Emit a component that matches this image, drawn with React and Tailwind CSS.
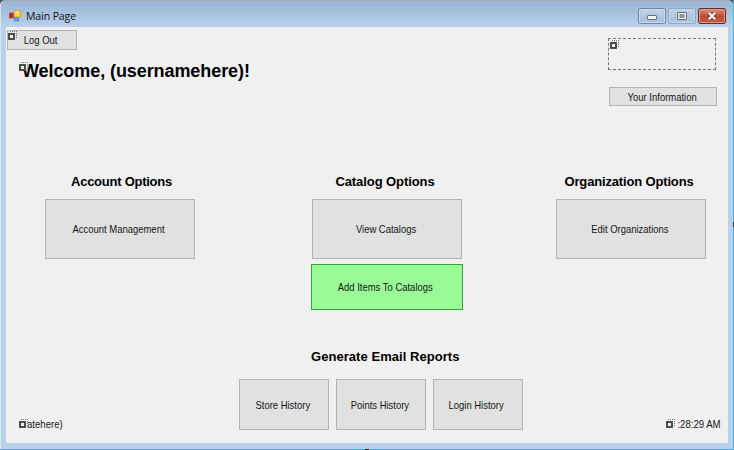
import React from "react";

function Glyph({ className = "" }) {
  return (
    <svg className={`absolute ${className}`} width="10" height="9" viewBox="0 0 10 9" shapeRendering="crispEdges">
      <path d="M2 0.5h7M8.5 2v6" stroke="#777" strokeDasharray="1 1" fill="none" />
      <rect x="0" y="2" width="7" height="7" fill="#f8f8f8" />
      <rect x="1" y="3" width="5" height="5" fill="#eee" stroke="#3c3c3c" strokeWidth="1.8" shapeRendering="auto" />
    </svg>
  );
}

function Button({ className = "", tone = "border-[#b3b3b3] bg-[#e1e1e1]", label = "", glyph = false, children }) {
  return (
    <button
      className={`relative flex shrink-0 items-center justify-center border text-[11px] leading-[12px] whitespace-nowrap text-[#161616] ${tone} ${className}`}
    >
      <span className={`block scale-x-[0.86] ${label}`}>{children}</span>
      {glyph && <Glyph className="top-0 left-0" />}
    </button>
  );
}

function Heading({ className = "", children }) {
  return <h2 className={`text-[13px] leading-[16px] font-bold whitespace-nowrap text-black ${className}`}>{children}</h2>;
}

function TitleBar() {
  return (
    <header className="flex h-[26px] shrink-0 items-start bg-gradient-to-b from-[#9ab6d3] to-[#b9d1ea] pr-[7px] pl-2">
      <svg className="mt-[9px] shrink-0" width="12" height="12" viewBox="0 0 12 12">
        <rect x="0.5" y="3" width="4" height="5" fill="#c52a22" stroke="#a94743" strokeWidth="0.7" />
        <rect x="5" y="0.5" width="6.5" height="6.5" fill="#f9cf35" stroke="#c49a32" strokeWidth="0.7" />
        <path d="M6 1.5h4v2H6z" fill="#ffe78a" />
        <rect x="5.3" y="7.7" width="4.4" height="3.3" fill="#6d9ee8" stroke="#4a78ca" strokeWidth="0.7" />
      </svg>
      <h1 className="mt-[8px] ml-[5px] font-['Open_Sans','Noto_Sans',sans-serif] text-[10.5px] leading-[15px] tracking-[-0.09px] text-[#111]">
        Main Page
      </h1>
      <div className="mt-[7px] ml-auto flex gap-[2px]">
        <div className="flex h-4 w-7 items-center justify-center rounded-[2px] border border-[#7189a5] bg-gradient-to-b from-[#c1d3e7] to-[#a5bfdb] shadow-[inset_0_0_0_1px_#cbdbed]">
          <div className="mt-[3px] h-[5px] w-[10px] rounded-[1px] border border-[#68717d] bg-[#f4f4f4]" />
        </div>
        <div className="flex h-4 w-7 items-center justify-center rounded-[2px] border border-[#8da5bf] bg-gradient-to-b from-[#bdd0e5] to-[#a9c1dc] shadow-[inset_0_0_0_1px_#c5d7ea]">
          <svg width="10" height="8" viewBox="0 0 10 8">
            <rect x="0.5" y="0.5" width="9" height="7" rx="0.5" fill="#eee" stroke="#626c78" />
            <rect x="3" y="2.8" width="4" height="2.4" fill="#aebed0" stroke="#626c78" />
          </svg>
        </div>
        <div className="flex h-4 w-7 items-center justify-center rounded-[2px] border border-[#692b30] bg-gradient-to-b from-[#d89583] via-[#c14b37] to-[#c35a40] shadow-[inset_0_0_0_1px_#dc998a]">
          <svg width="10" height="8" viewBox="0 0 10 8">
            <path d="M1.8 0.8l6.4 6.4M8.2 0.8l-6.4 6.4" stroke="#5d3940" strokeWidth="3.8" />
            <path d="M1.8 0.8l6.4 6.4M8.2 0.8l-6.4 6.4" stroke="#f7f4f4" strokeWidth="2.3" />
          </svg>
        </div>
      </div>
    </header>
  );
}

export default function App() {
  return (
    <div className="relative h-[450px] w-[734px] overflow-hidden bg-[#39bcd9] font-['Liberation_Sans',Arial,sans-serif]">
      <div className="h-[449px] w-[733px] bg-[#4a5056]">
        <div className="h-[449px] rounded-t-[5px] bg-[#a5abb0] pt-px">
          <div className="flex h-[448px] flex-col overflow-hidden rounded-t-[5px] border-l border-[#d6e5f4] bg-[#b9d1ea]">
            <TitleBar />
            <main className="mr-[5px] ml-[5px] flex h-[416px] w-[722px] shrink-0 flex-col bg-[#f0f0f0]">
              <section className="flex h-[147px] shrink-0 items-start justify-between pt-[3px] pr-[11px] pl-px">
                <div>
                  <Button className="h-[20px] w-[70px]" label="-ml-[3px]" glyph>
                    Log Out
                  </Button>
                  <div className="relative mt-[10px] ml-[15px] text-[18px] leading-[22px] font-bold tracking-[-0.08px] whitespace-nowrap text-black">
                    Welcome, (usernamehere)!
                    <Glyph className="top-[2px] left-[-3px]" />
                  </div>
                </div>
                <div className="flex flex-col items-end pt-[8px]">
                  <div className="relative mr-px h-[32px] w-[108px] border border-dashed border-[#777]">
                    <Glyph className="top-[1px] left-[1px]" />
                  </div>
                  <Button className="mt-[17px] h-[19px] w-[108px]" label="-ml-[2px]">Your Information</Button>
                </div>
              </section>

              <section className="flex h-[147px] shrink-0 items-start pl-[39px]">
                <div className="flex w-[150px] flex-col items-center">
                  <Heading className="ml-[3px] tracking-[-0.25px]">Account Options</Heading>
                  <Button className="mt-[9px] h-[60px] w-[150px]" label="-ml-[2px]">Account Management</Button>
                </div>
                <div className="ml-[116px] flex w-[152px] flex-col items-center">
                  <Heading className="-ml-[4px] tracking-[-0.08px]">Catalog Options</Heading>
                  <Button className="mt-[9px] h-[60px] w-[150px]" label="-ml-[2px]">View Catalogs</Button>
                  <Button
                    className="mt-[5px] h-[46px] w-[152px]"
                    tone="border-[#35a535] bg-[#98fb98]"
                    label="-ml-[3px]"
                  >
                    Add Items To Catalogs
                  </Button>
                </div>
                <div className="ml-[93px] flex w-[150px] flex-col items-center">
                  <Heading className="-ml-[4px] tracking-[-0.16px]">Organization Options</Heading>
                  <Button className="mt-[9px] h-[60px] w-[150px]" label="-ml-[3px]">Edit Organizations</Button>
                </div>
              </section>

              <section className="flex flex-col pt-[27px]">
                <Heading className="mt-px ml-[305px] tracking-[0.05px]">Generate Email Reports</Heading>
                <div className="mt-[14px] flex items-end pr-[7px] pl-[21px] text-[11px] leading-[15px] text-[#161616]">
                  <div className="relative -mb-[2px] w-[212px]">
                    <span className="block origin-left scale-x-[0.87]">atehere)</span>
                    <Glyph className="top-[2px] left-[-8px]" />
                  </div>
                  <div className="flex gap-[7px]">
                    <Button className="h-[51px] w-[90px]" label="-ml-[2px]">Store History</Button>
                    <Button className="h-[51px] w-[90px]" label="-ml-[2px]">Points History</Button>
                    <Button className="h-[51px] w-[90px]" label="-ml-[4px]">Login History</Button>
                  </div>
                  <div className="relative -mb-[2px] ml-auto">
                    <span className="block origin-right scale-x-[0.87]">:28:29 AM</span>
                    <Glyph className="top-[2px] right-[45px]" />
                  </div>
                </div>
              </section>
            </main>
          </div>
        </div>
      </div>
      <div className="absolute top-[222px] right-0 h-[5px] w-px bg-[#333]" />
      <div className="absolute bottom-0 left-[365px] h-px w-[4px] bg-[#111]" />
    </div>
  );
}
